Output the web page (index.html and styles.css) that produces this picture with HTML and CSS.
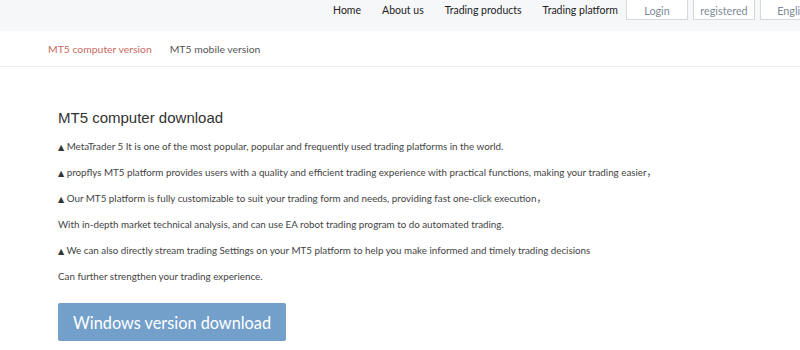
FILE: index.html
```
<!DOCTYPE html>
<html>
<head>
<meta charset="utf-8">
<link rel="stylesheet" href="styles.css">
</head>
<body>
<header class="topbar">
  <nav class="nav">
    <a class="nav-item">Home</a>
    <a class="nav-item">About us</a>
    <a class="nav-item">Trading products</a>
    <a class="nav-item">Trading platform</a>
  </nav>
  <div class="actions">
    <span class="btn-box">Login</span>
    <span class="btn-box">registered</span>
    <span class="btn-box lang">English</span>
  </div>
</header>
<div class="tabs">
  <span class="tab active">MT5 computer version</span>
  <span class="tab">MT5 mobile version</span>
</div>
<main class="content">
  <h1 class="title">MT5 computer download</h1>
  <p><span class="tri">▲</span> MetaTrader 5 It is one of the most popular, popular and frequently used trading platforms in the world.</p>
  <p><span class="tri">▲</span> propflys MT5 platform provides users with a quality and efficient trading experience with practical functions, making your trading easier<span class="cjk">，</span></p>
  <p><span class="tri">▲</span> Our MT5 platform is fully customizable to suit your trading form and needs, providing fast one-click execution<span class="cjk">，</span></p>
  <p>With in-depth market technical analysis, and can use EA robot trading program to do automated trading.</p>
  <p><span class="tri">▲</span> We can also directly stream trading Settings on your MT5 platform to help you make informed and timely trading decisions</p>
  <p>Can further strengthen your trading experience.</p>
  <a class="download">Windows version download</a>
</main>
</body>
</html>
```
FILE: styles.css
```
* { box-sizing: border-box; }
html, body { margin: 0; padding: 0; }
body {
  width: 800px;
  height: 350px;
  overflow: hidden;
  background: #fff;
  font-family: Lato, "Noto Sans CJK SC", sans-serif;
  color: #333;
}
.topbar {
  height: 31px;
  background: #f6f7f9;
  display: flex;
  justify-content: flex-end;
  align-items: flex-start;
  overflow: hidden;
}
.nav {
  display: flex;
  gap: 21px;
  padding-top: 2px;
  margin-right: 8px;
}
.nav-item {
  font-size: 10.5px;
  line-height: 16px;
  color: #222;
}
.actions {
  display: flex;
  gap: 5px;
  margin-right: -28px;
  margin-top: -4px;
}
.btn-box {
  display: flex;
  align-items: center;
  justify-content: center;
  width: 62px;
  height: 24px;
  padding-top: 4px;
  border: 1px solid #d6d8db;
  background: #fff;
  font-size: 10.8px;
  color: #7d8a99;
}
.lang { width: 68px; }
.tabs {
  height: 36px;
  display: flex;
  gap: 18px;
  align-items: center;
  padding-left: 48px;
  border-bottom: 1px solid #ececec;
  font-size: 10.4px;
}
.tab { color: #555; }
.tab.active { color: #c96a5e; }
.content {
  padding: 41px 0 0 58px;
}
.title {
  margin: 0 0 5px;
  font-family: "Liberation Sans", Arial, sans-serif;
  font-weight: normal;
  font-size: 15px;
  line-height: 20px;
  color: #333;
}
.content p {
  margin: 0;
  height: 26px;
  font-size: 9.8px;
  line-height: 26px;
  color: #444;
}
.tri {
  font-family: "DejaVu Sans", sans-serif;
  font-size: 8px;
  line-height: 0;
  color: #333;
}
.cjk {
  font-family: "Noto Sans CJK SC", sans-serif;
  line-height: 0;
}
.download {
  display: inline-flex;
  align-items: center;
  justify-content: center;
  margin-top: 14px;
  width: 228px;
  height: 38px;
  background: #739fcb;
  border-radius: 2px;
  color: #fff;
  font-size: 16.3px;
}
```
